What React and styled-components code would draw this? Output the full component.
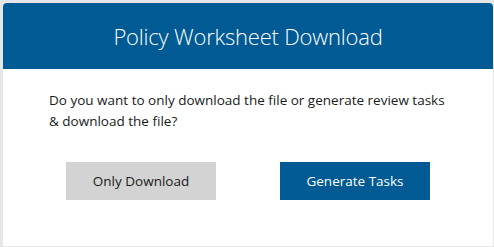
import React from 'react';
import styled, { createGlobalStyle } from 'styled-components';

const GlobalStyle = createGlobalStyle`
  html, body {
    margin: 0;
    padding: 0;
    background: #e6e6e6;
  }
  body {
    font-family: "Open Sans", "Noto Sans", sans-serif;
  }
`;

const Page = styled.div`
  padding: 3px 1px 1px 3px;
`;

const Dialog = styled.div`
  background: #ffffff;
  border-radius: 4px 4px 0 0;
  height: 243px;
  overflow: hidden;
  display: flex;
  flex-direction: column;
`;

const Header = styled.div`
  height: 66px;
  background: #005a94;
  display: flex;
  align-items: center;
  justify-content: center;

  h1 {
    margin: 0;
    color: #ffffff;
    font-family: "Open Sans", sans-serif;
    font-weight: 300;
    font-size: 22px;
    letter-spacing: -0.2px;
  }
`;

const Body = styled.div`
  padding: 21px 46px 0 46px;
  display: flex;
  flex-direction: column;
`;

const Message = styled.p`
  margin: 0;
  color: #1a1a1a;
  font-size: 13.5px;
  line-height: 21px;
`;

const Actions = styled.div`
  display: flex;
  justify-content: center;
  gap: 64px;
  margin-top: 30px;
`;

const Button = styled.button`
  width: 150px;
  height: 38px;
  border: none;
  border-radius: 0;
  font-family: "Open Sans", sans-serif;
  font-size: 13.5px;
  cursor: pointer;
  background: ${(p) => (p.$primary ? '#005a94' : '#d3d3d3')};
  color: ${(p) => (p.$primary ? '#ffffff' : '#1a1a1a')};
`;

export default function App() {
  return (
    <Page>
      <GlobalStyle />
      <Dialog>
        <Header>
          <h1>Policy Worksheet Download</h1>
        </Header>
        <Body>
          <Message>
            Do you want to only download the file or generate review tasks
            &amp; download the file?
          </Message>
          <Actions>
            <Button>Only Download</Button>
            <Button $primary>Generate Tasks</Button>
          </Actions>
        </Body>
      </Dialog>
    </Page>
  );
}
